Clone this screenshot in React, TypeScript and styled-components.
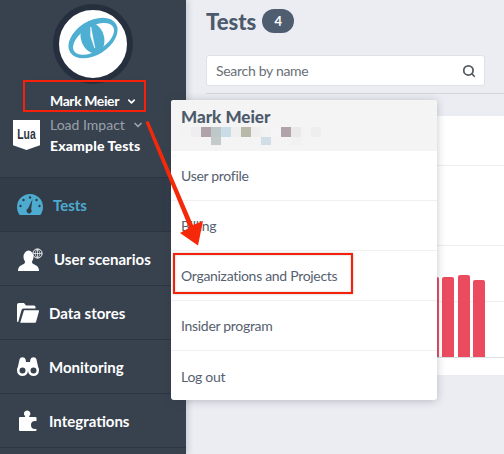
import { createGlobalStyle, styled } from 'styled-components'
import { ChevronDown, Search } from 'lucide-react'

const GlobalStyle = createGlobalStyle`
    html, body {
        margin: 0;
        padding: 0;
        background: #ecedf3;
        font-family: Lato, "Open Sans", sans-serif;
        overflow: hidden;
    }
`

const Page = styled.div`
    position: relative;
    display: flex;
    width: 504px;
    height: 454px;
    overflow: hidden;
`

const Sidebar = styled.aside`
    width: 186px;
    flex-shrink: 0;
    background: #38424f;
    box-shadow: 2px 0 6px rgba(40, 50, 60, 0.18);
    z-index: 1;
`

const SidebarHead = styled.div`
    height: 178px;
    box-sizing: border-box;
    padding-top: 4px;
    border-bottom: 1px solid #2c3541;
`

const Avatar = styled.div`
    display: flex;
    justify-content: center;
    width: 68px;
    height: 62px;
    margin: 0 auto;
    padding-top: 6px;
    border: 6px solid #262f3e;
    border-radius: 50%;
    background: #fff;
`

const UserRow = styled.div`
    display: flex;
    align-items: center;
    gap: 7px;
    margin: 8px 0 0 50px;
    color: #fff;
    font-size: 14px;
    font-weight: 700;
    line-height: 18px;
    letter-spacing: -0.4px;
`

const Project = styled.div`
    display: flex;
    gap: 10px;
    margin: 5px 0 0 13px;
`

const LuaBadge = styled.div`
    width: 27px;
    height: 30px;
    margin-top: 5px;
    padding-top: 6px;
    box-sizing: border-box;
    background: #fff;
    clip-path: polygon(0 0, 100% 0, 100% 84%, 50% 100%, 0 84%);
    color: #2c3541;
    font-family: "Liberation Sans", sans-serif;
    font-size: 13px;
    font-weight: 700;
    line-height: 16px;
    text-align: center;
`

const LuaText = styled.span`
    display: block;
    transform: scale(0.8, 1.15);
`

const ProjectOrg = styled.div`
    display: flex;
    align-items: center;
    gap: 7px;
    color: #9aa1ab;
    font-size: 14px;
    line-height: 19px;
`

const ProjectName = styled.div`
    margin-top: 3px;
    color: #fff;
    font-size: 14px;
    font-weight: 900;
    line-height: 18px;
    letter-spacing: 0.15px;
`

const NavItem = styled.div<{ $active?: boolean; $gap: number }>`
    display: flex;
    align-items: center;
    gap: ${(p) => p.$gap}px;
    height: 54px;
    box-sizing: border-box;
    padding-left: 17px;
    border-bottom: 1px solid #2c3541;
    background: ${(p) => (p.$active ? '#323c49' : 'transparent')};
    color: ${(p) => (p.$active ? '#4dabcf' : '#fff')};
    font-size: 15px;
    font-weight: 700;
`

const Main = styled.main`
    flex: 1;
    padding-left: 20px;
    min-width: 0;
`

const TitleRow = styled.div`
    display: flex;
    align-items: center;
    gap: 6px;
    height: 42px;
`

const Title = styled.h1`
    margin: 0;
    color: #4d5a6b;
    font-size: 22px;
    font-weight: 900;
`

const CountBadge = styled.span`
    width: 32px;
    height: 24px;
    border-radius: 12px;
    background: #4e5d70;
    color: #fff;
    font-size: 13px;
    font-weight: 700;
    line-height: 24px;
    text-align: center;
`

const SearchBox = styled.div`
    display: flex;
    align-items: center;
    justify-content: space-between;
    width: 279px;
    height: 31px;
    box-sizing: border-box;
    margin-top: 13px;
    padding: 0 8px 0 9px;
    background: #fff;
    border: 1px solid #dfe1e7;
    border-radius: 3px;
    color: #6a6f76;
    font-size: 14px;
    letter-spacing: -0.3px;
`

const Rule = styled.div`
    height: 1px;
    margin-top: 7px;
    background: #d3d5da;
`

const Card = styled.section`
    height: 259px;
    margin-top: 22px;
    background: #fff;
`

const CardRow = styled.div<{ $height: number }>`
    height: ${(p) => p.$height}px;
    box-sizing: border-box;
    border-bottom: 1px solid #eeeeef;
`

const Chart = styled.div`
    position: relative;
    display: flex;
    align-items: flex-end;
    justify-content: flex-end;
    gap: 3.5px;
    height: 111px;
    padding-right: 19px;
    border-bottom: 1px solid #dcdde0;

    &::before {
        content: '';
        position: absolute;
        left: 0;
        right: 0;
        top: 55px;
        height: 1px;
        background: #eeeeef;
    }
`

const Bar = styled.div<{ $height: number }>`
    position: relative;
    width: 12px;
    height: ${(p) => p.$height}px;
    border-radius: 2px 2px 0 0;
    background: #ea4b5f;
`

const Dropdown = styled.div`
    position: absolute;
    left: 171px;
    top: 100px;
    width: 266px;
    height: 300px;
    background: #fff;
    border-radius: 3px;
    box-shadow: 0 1px 8px rgba(50, 55, 70, 0.28);
    color: #56616f;
    z-index: 2;
    overflow: hidden;
`

const DropdownHead = styled.div`
    height: 51px;
    box-sizing: border-box;
    padding: 7px 10px 0;
    background: #f4f4f4;
`

const DropdownName = styled.div`
    color: #4d5a6b;
    font-size: 17px;
    font-weight: 900;
    line-height: 20px;
`

const Redacted = styled.svg`
    display: block;
`

const DropdownItem = styled.div`
    display: flex;
    align-items: center;
    height: 50px;
    box-sizing: border-box;
    padding-left: 10px;
    border-bottom: 1px solid #f0f0f1;
    font-size: 14px;
    letter-spacing: -0.3px;

    &:last-child {
        border-bottom: 0;
    }
`

const Callout = styled.div<{ $left: number; $top: number; $width: number; $height: number }>`
    position: absolute;
    left: ${(p) => p.$left}px;
    top: ${(p) => p.$top}px;
    width: ${(p) => p.$width}px;
    height: ${(p) => p.$height}px;
    box-sizing: border-box;
    border: 2px solid #f5210b;
    box-shadow: 0 0 2px rgba(60, 60, 60, 0.35), inset 0 0 2px rgba(60, 60, 60, 0.35);
    z-index: 3;
`

const Arrow = styled.svg`
    position: absolute;
    left: 0;
    top: 0;
    z-index: 3;
`

const blurRows = [
    ['#f3f3f3', '#eeeeee', '#b1a2a9', '#bfc8c9', '#c9dde7', '#efefef', '#b9b9a9', '#eeeeee', '#f2f2f2', '#f5f5f5', '#b1a3a9', '#e9e9e9', '#f3f3f3', '#eeeeee'],
    ['#f4f4f4', '#f4f4f4', '#f4f4f4', '#c4c9c9', '#f4f4f4', '#f4f4f4', '#f4f4f4', '#f4f4f4', '#d1dde7', '#f4f4f4', '#f4f4f4', '#f1f1f1', '#f4f4f4', '#f4f4f4'],
]

const menuItems = ['User profile', 'Billing', 'Organizations and Projects', 'Insider program', 'Log out']
const barHeights = [80, 80, 82, 77]

function LogoMark() {
    return (
        <svg width="50" height="44" viewBox="0 0 50 44">
            <g transform="rotate(-32 25 22)">
                <ellipse cx="25" cy="22" rx="27" ry="17" fill="#4fafd2" />
                <ellipse cx="25" cy="23" rx="23" ry="12" fill="#fff" />
            </g>
            <ellipse cx="24.500" cy="22" rx="11.500" ry="15.500" transform="rotate(-18 24.500 22)" fill="#4fafd2" />
            <path d="M22.800 11 L26.800 32 L22.600 20 Z" fill="#fff" stroke="#fff" strokeWidth="0.6" />
        </svg>
    )
}

function GaugeIcon() {
    return (
        <svg width="26" height="21" viewBox="0 0 26 21">
            <path d="M13 0A13 13 0 0 0 0 13c0 2.800.8 5.200 2 7l.6 1h20.800l.6-1c1.200-1.800 2-4.200 2-7A13 13 0 0 0 13 0z" fill="#4dabcf" />
            <circle cx="13" cy="3.500" r="1.200" fill="#323c49" />
            <circle cx="6.500" cy="6" r="1.200" fill="#323c49" />
            <circle cx="3.500" cy="12" r="1.200" fill="#323c49" />
            <circle cx="22.500" cy="12" r="1.200" fill="#323c49" />
            <circle cx="19.500" cy="6" r="1.200" fill="#323c49" />
            <path d="M15.500 5l-1.400 10.300a2.500 2.500 0 1 1-3-.8z" fill="#323c49" />
        </svg>
    )
}

function UserGlobeIcon() {
    return (
        <svg width="26" height="24" viewBox="0 0 26 24">
            <ellipse cx="11.500" cy="10" rx="5" ry="6.500" fill="#fff" />
            <path d="M1 24c0-4 2-5.500 6-7l1.500-2.500h6L16 17c4 1.500 6 3 6 7z" fill="#fff" />
            <circle cx="20.500" cy="6.500" r="4.600" fill="#38424f" stroke="#fff" strokeWidth="1" />
            <path d="M16 6.500h9M20.500 2v9M20.500 2c-3 2.500-3 6.500 0 9M20.500 2c3 2.500 3 6.500 0 9" fill="none" stroke="#fff" strokeWidth="0.7" />
        </svg>
    )
}

function FolderIcon() {
    return (
        <svg width="22" height="20" viewBox="0 0 22 20">
            <path d="M0 2a2 2 0 0 1 2-2h5l2 2.500h8a1.500 1.500 0 0 1 1.500 1.500v1.500H6.500a2 2 0 0 0-2 1.500L1.200 19H.7a.7.7 0 0 1-.7-.7z" fill="#fff" />
            <path d="M7 7.200h14.300a.7.700 0 0 1 .7 1l-3 10.800a1 1 0 0 1-1 .8H3.200z" fill="#fff" />
        </svg>
    )
}

function BinocularsIcon() {
    return (
        <svg width="22" height="19" viewBox="0 0 22 19">
            <path d="M.2 13L2.500 2.500C3 1 4 .3 5.500.3S8 1 8.600 2.500L9 5h4l.4-2.500C14 1 15 .3 16.500.3S19 1 19.500 2.500L21.800 13z" fill="#fff" />
            <circle cx="5.500" cy="13.500" r="5.500" fill="#fff" />
            <circle cx="16.500" cy="13.500" r="5.500" fill="#fff" />
            <circle cx="5.500" cy="13.500" r="3" fill="#38424f" />
            <circle cx="16.500" cy="13.500" r="3" fill="#38424f" />
        </svg>
    )
}

function PuzzleIcon() {
    return (
        <svg width="22" height="22" viewBox="0 0 22 22">
            <path d="M2 8a1 1 0 0 1 1-1h4.500c.8 0 .8-.8.300-1.300C7 4.800 6.800 4 7 3c.3-1.600 1.700-2.500 3.200-2.500S13 1.400 13.300 3c.2 1-.1 1.800-.8 2.700-.5.500-.5 1.300.3 1.300h5.700a1 1 0 0 1 1 1v12a1 1 0 0 1-1 1H3a1 1 0 0 1-1-1z" fill="#fff" />
            <circle cx="18" cy="15" r="4" fill="#38424f" />
            <rect x="19" y="11" width="3" height="8" fill="#38424f" />
        </svg>
    )
}

export default function App() {
    return (
        <Page>
            <GlobalStyle />
            <Sidebar>
                <SidebarHead>
                    <Avatar>
                        <LogoMark />
                    </Avatar>
                    <UserRow>
                        Mark Meier
                        <ChevronDown size={11} strokeWidth={3.5} />
                    </UserRow>
                    <Project>
                        <LuaBadge>
                            <LuaText>Lua</LuaText>
                        </LuaBadge>
                        <div>
                            <ProjectOrg>
                                Load Impact
                                <ChevronDown size={12} strokeWidth={3.5} />
                            </ProjectOrg>
                            <ProjectName>Example Tests</ProjectName>
                        </div>
                    </Project>
                </SidebarHead>
                <NavItem $active $gap={10}>
                    <GaugeIcon />
                    Tests
                </NavItem>
                <NavItem $gap={11}>
                    <UserGlobeIcon />
                    User scenarios
                </NavItem>
                <NavItem $gap={10}>
                    <FolderIcon />
                    Data stores
                </NavItem>
                <NavItem $gap={10}>
                    <BinocularsIcon />
                    Monitoring
                </NavItem>
                <NavItem $gap={10}>
                    <PuzzleIcon />
                    Integrations
                </NavItem>
            </Sidebar>
            <Main>
                <TitleRow>
                    <Title>Tests</Title>
                    <CountBadge>4</CountBadge>
                </TitleRow>
                <SearchBox>
                    Search by name
                    <Search size={14} strokeWidth={3} color="#555b62" />
                </SearchBox>
                <Rule />
                <Card>
                    <CardRow $height={50} />
                    <CardRow $height={80} />
                    <Chart>
                        {barHeights.map((height, index) => (
                            <Bar key={index} $height={height} />
                        ))}
                    </Chart>
                </Card>
            </Main>
            <Dropdown>
                <DropdownHead>
                    <DropdownName>Mark Meier</DropdownName>
                    <Redacted width="140" height="18" viewBox="0 0 140 18">
                        {blurRows.map((row, y) =>
                            row.map((color, x) => (
                                <rect key={`${x}-${y}`} x={x * 10} y={y * 10} width="10" height={y ? 8 : 10} fill={color} />
                            )),
                        )}
                    </Redacted>
                </DropdownHead>
                {menuItems.map((item) => (
                    <DropdownItem key={item}>{item}</DropdownItem>
                ))}
            </Dropdown>
            <Callout $left={23} $top={80} $width={123} $height={32} />
            <Callout $left={173} $top={253} $width={180} $height={41} />
            <Arrow width="504" height="454" viewBox="0 0 504 454">
                <polygon points="145.500,122 148.500,121 193,225 203,221 198,245.500 180,233 189,228" fill="#f5290a" />
            </Arrow>
        </Page>
    )
}
